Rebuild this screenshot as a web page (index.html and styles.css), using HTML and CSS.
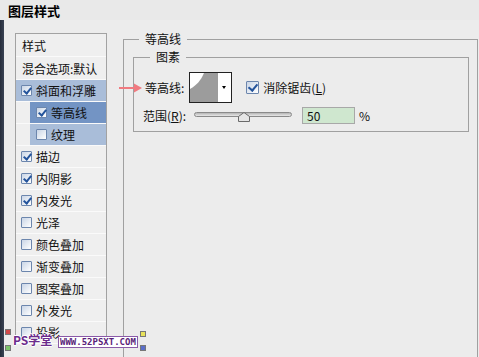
FILE: index.html
```html
<!DOCTYPE html>
<html lang="zh-CN">
<head>
  <meta charset="UTF-8">
  <title>图层样式</title>
  <link rel="stylesheet" href="styles.css">
</head>
<body>
  <div class="titlebar">图层样式</div>

  <div class="dialog">
    <div class="edge"></div>

    <ul class="style-list">
      <li class="head">样式</li>
      <li class="head">混合选项:默认</li>
      <li class="sel-light"><span class="cb on"></span>斜面和浮雕</li>
      <li class="sub"><div class="sub-inner sel-dark"><span class="cb on"></span>等高线</div></li>
      <li class="sub"><div class="sub-inner sel-light"><span class="cb"></span>纹理</div></li>
      <li><span class="cb on"></span>描边</li>
      <li><span class="cb on"></span>内阴影</li>
      <li><span class="cb on"></span>内发光</li>
      <li><span class="cb"></span>光泽</li>
      <li><span class="cb"></span>颜色叠加</li>
      <li><span class="cb"></span>渐变叠加</li>
      <li><span class="cb"></span>图案叠加</li>
      <li><span class="cb"></span>外发光</li>
      <li><span class="cb"></span>投影</li>
    </ul>

    <div class="panel">
      <fieldset class="group outer">
        <legend>等高线</legend>
        <fieldset class="group inner">
          <legend>图素</legend>

          <div class="row contour-row">
            <svg class="pointer" width="24" height="10" viewBox="0 0 24 10">
              <path d="M0 5 H17" stroke="#f07a80" stroke-width="2"/>
              <path d="M15 0.5 L23 5 L15 9.5 Z" fill="#f07a80"/>
            </svg>
            <span class="label">等高线:</span>
            <div class="contour-picker">
              <svg class="preview" width="28" height="29" viewBox="0 0 28 29">
                <rect width="28" height="29" fill="#9c9c9c"/>
                <path d="M0 0 H14 C11 7 7 12 0 16 Z" fill="#fff"/>
              </svg>
              <div class="drop"></div>
            </div>
            <span class="cb big on"></span>
            <span class="check-text">消除锯齿(<u>L</u>)</span>
          </div>

          <div class="row range-row">
            <span class="label">范围(<u>R</u>):</span>
            <div class="slider">
              <div class="track"></div>
              <svg class="thumb" width="12" height="10" viewBox="0 0 12 10">
                <path d="M0.5 9.5 V4.5 L6 0.5 L11.5 4.5 V9.5 Z" fill="#e6e6e6" stroke="#6a6a6a"/>
              </svg>
            </div>
            <div class="num-input">50</div>
            <span class="unit">%</span>
          </div>
        </fieldset>
      </fieldset>
    </div>
  </div>

  <div class="watermark">
    <span class="mark mark-tl"></span>
    <span class="mark mark-bl"></span>
    <span class="wm-name">PS学堂</span>
    <span class="wm-url">WWW.52PSXT.COM</span>
    <span class="mark mark-tr"></span>
    <span class="mark mark-br"></span>
  </div>
</body>
</html>
```

FILE: styles.css
```css
html,
body {
  margin: 0;
  padding: 0;
}

body {
  width: 479px;
  height: 357px;
  overflow: hidden;
  position: relative;
  background: #ececec;
  color: #111;
  font-family: "Noto Sans CJK SC", "Liberation Sans", sans-serif;
  font-size: 12px;
}

.titlebar {
  height: 20px;
  line-height: 21px;
  padding-left: 8px;
  font-size: 13px;
  font-weight: bold;
  color: #000;
  background: #e9e9e9;
}

.dialog {
  display: flex;
  height: 337px;
}

.edge {
  width: 4px;
  flex: none;
  background: linear-gradient(to right, #262d3b, #3a4354);
}

/* left style list */
.style-list {
  list-style: none;
  margin: 13px 0 0 11px;
  padding: 0;
  width: 90px;
  flex: none;
  align-self: flex-start;
  border: 1px solid #a2a2a2;
  border-bottom: none;
  background: #efefef;
}

.style-list li {
  display: flex;
  align-items: center;
  height: 21px;
  padding-left: 5px;
  border-bottom: 1px solid #fafafa;
  white-space: nowrap;
}

.style-list li.head {
  height: 22px;
  padding-left: 6px;
}

.style-list li.sub {
  padding-left: 0;
}

.style-list .sub-inner {
  display: flex;
  align-items: center;
  height: 100%;
  flex: 1;
  margin-left: 14px;
  padding-left: 6px;
}

.sel-light {
  background: #a9bdd9;
}

.sel-dark {
  background: #7394c4;
}

/* checkbox */
.cb {
  position: relative;
  width: 9px;
  height: 9px;
  flex: none;
  margin-right: 4px;
  border: 1px solid #6c86ad;
  border-radius: 1px;
  background: linear-gradient(135deg, #c9d5e6, #ffffff);
}

.cb.on::after {
  content: '';
  position: absolute;
  left: 3px;
  top: 0;
  width: 3px;
  height: 6px;
  border-right: 2px solid #24549c;
  border-bottom: 2px solid #24549c;
  transform: rotate(40deg);
}

.cb.big {
  width: 11px;
  height: 11px;
  margin-left: 14px;
  margin-right: 4px;
}

.cb.big.on::after {
  left: 3px;
  top: 0;
  width: 4px;
  height: 7px;
}

/* right panel */
.panel {
  margin-left: 16px;
}

.group {
  margin: 0;
  border: 1px solid #a0a0a0;
  min-width: 0;
}

.group legend {
  padding: 0 6px;
  line-height: 14px;
  font-size: 12px;
}

.outer {
  box-sizing: border-box;
  width: 355px;
  height: 340px;
  margin-top: 12px;
  padding: 4px 8px 0 9px;
}

.outer > legend {
  margin-left: 6px;
}

.inner {
  padding: 8px 0 7px 9px;
}

.inner > legend {
  margin-left: 7px;
}

.row {
  display: flex;
  align-items: center;
}

.contour-row {
  position: relative;
  height: 31px;
}

.contour-row .label {
  margin-left: 2px;
}

.pointer {
  position: absolute;
  left: -24px;
  top: 11px;
}

.contour-picker {
  display: flex;
  margin-left: 5px;
  height: 29px;
  border: 1px solid #222;
  background: #fff;
}

.drop {
  width: 13px;
  position: relative;
}

.drop::after {
  content: '';
  position: absolute;
  left: 4px;
  top: 13px;
  border-left: 2.5px solid transparent;
  border-right: 2.5px solid transparent;
  border-top: 3px solid #000;
}

.range-row {
  height: 17px;
  margin-top: 4px;
}

u {
  text-decoration: underline;
  text-underline-offset: 1px;
}

.slider {
  position: relative;
  width: 98px;
  height: 17px;
  margin-left: 8px;
}

.track {
  margin-top: 5px;
  height: 3px;
  border: 1px solid #8a8a8a;
  border-radius: 3px;
  background: linear-gradient(#b5b5b5, #e8e8e8);
}

.thumb {
  position: absolute;
  left: 44px;
  top: 5px;
}

.num-input {
  box-sizing: border-box;
  width: 53px;
  height: 17px;
  margin-left: 10px;
  padding-left: 4px;
  line-height: 15px;
  border: 1px solid #a8a8a8;
  background: #cfe7cf;
}

.unit {
  margin-left: 4px;
}

/* watermark */
.watermark {
  position: absolute;
  left: 5px;
  top: 329px;
  width: 141px;
  height: 22px;
}

.mark {
  position: absolute;
  width: 4px;
  height: 4px;
  border: 1px solid #777;
}

.mark-tl { left: 0; top: 0; background: #d24a4a; }
.mark-bl { left: 0; top: 16px; background: #7bc46a; }
.mark-tr { right: 0; top: 2px; background: #e8e25a; }
.mark-br { right: 0; top: 16px; background: #5a6ec8; }

.wm-name {
  position: absolute;
  left: 8px;
  top: 4px;
  font-size: 12px;
  line-height: 14px;
  font-weight: bold;
  color: #6b2b8c;
  text-shadow: 1px 0 #fff, -1px 0 #fff, 0 1px #fff, 0 -1px #fff;
}

.wm-url {
  position: absolute;
  left: 53px;
  top: 7px;
  font-family: "DejaVu Sans Mono", monospace;
  font-size: 9px;
  line-height: 10px;
  font-weight: bold;
  color: #5a1f7a;
  background: #fff;
  padding: 0 1px;
  border: 1px solid #8a5aa8;
}
```
